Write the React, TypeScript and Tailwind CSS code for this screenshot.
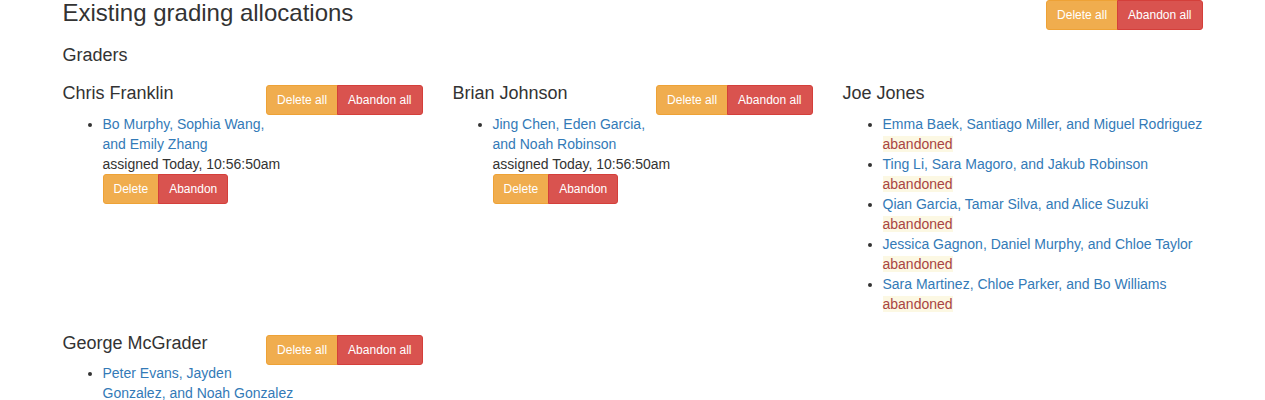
const font = "font-['Liberation_Sans','Helvetica_Neue',Helvetica,Arial,sans-serif]";

type Alloc = { names: string; abandoned?: boolean };
type Grader = { name: string; allocs: Alloc[] };

const graders: Grader[] = [
  { name: "Chris Franklin", allocs: [{ names: "Bo Murphy, Sophia Wang, and Emily Zhang" }] },
  { name: "Brian Johnson", allocs: [{ names: "Jing Chen, Eden Garcia, and Noah Robinson" }] },
  {
    name: "Joe Jones",
    allocs: [
      { names: "Emma Baek, Santiago Miller, and Miguel Rodriguez", abandoned: true },
      { names: "Ting Li, Sara Magoro, and Jakub Robinson", abandoned: true },
      { names: "Qian Garcia, Tamar Silva, and Alice Suzuki", abandoned: true },
      { names: "Jessica Gagnon, Daniel Murphy, and Chloe Taylor", abandoned: true },
      { names: "Sara Martinez, Chloe Parker, and Bo Williams", abandoned: true },
    ],
  },
  { name: "George McGrader", allocs: [{ names: "Peter Evans, Jayden Gonzalez, and Noah Gonzalez" }] },
];

function BtnGroup({ left, right, className = "" }: { left: string; right: string; className?: string }) {
  return (
    <div className={`inline-flex ${className}`}>
      <button className="px-[10px] py-[5px] text-[12px] leading-[1.5] text-white bg-[#f0ad4e] border border-[#eea236] rounded-l-[3px]">
        {left}
      </button>
      <button className="-ml-px px-[10px] py-[5px] text-[12px] leading-[1.5] text-white bg-[#d9534f] border border-[#d43f3a] rounded-r-[3px]">
        {right}
      </button>
    </div>
  );
}

function GraderColumn({ grader }: { grader: Grader }) {
  const active = grader.allocs.some((a) => !a.abandoned);
  return (
    <div>
      {active && <BtnGroup left="Delete all" right="Abandon all" className="float-right mt-[1px]" />}
      <h4 className="text-[18px] leading-[1.1] font-medium">{grader.name}</h4>
      <ul className="list-disc pl-10 mt-[10px] mb-[10px]">
        {grader.allocs.map((a) => (
          <li key={a.names} className="leading-[20px]">
            <a href="#" className="text-[#337ab7]">
              {a.names}
            </a>
            {a.abandoned ? (
              <div>
                <span className="bg-[#fcf8e3] text-[#a94442]">abandoned</span>
              </div>
            ) : (
              <>
                <div>assigned Today, 10:56:50am</div>
                <BtnGroup left="Delete" right="Abandon" className="align-top" />
              </>
            )}
          </li>
        ))}
      </ul>
    </div>
  );
}

export default function App() {
  return (
    <div className={`${font} bg-white text-[#333] text-[14px] leading-[20px] min-h-[400px]`}>
      <div className="w-[1140px] mx-auto">
        <div className="flex justify-between items-start">
          <h3 className="text-[24px] leading-[1.1] font-medium">Existing grading allocations</h3>
          <BtnGroup left="Delete all" right="Abandon all" />
        </div>
        <h4 className="mt-[16px] text-[18px] leading-[1.1] font-medium">Graders</h4>
        <div className="grid grid-cols-3 gap-x-[30px] gap-y-[10px] mt-[18px]">
          {graders.map((g) => (
            <GraderColumn key={g.name} grader={g} />
          ))}
        </div>
      </div>
    </div>
  );
}
